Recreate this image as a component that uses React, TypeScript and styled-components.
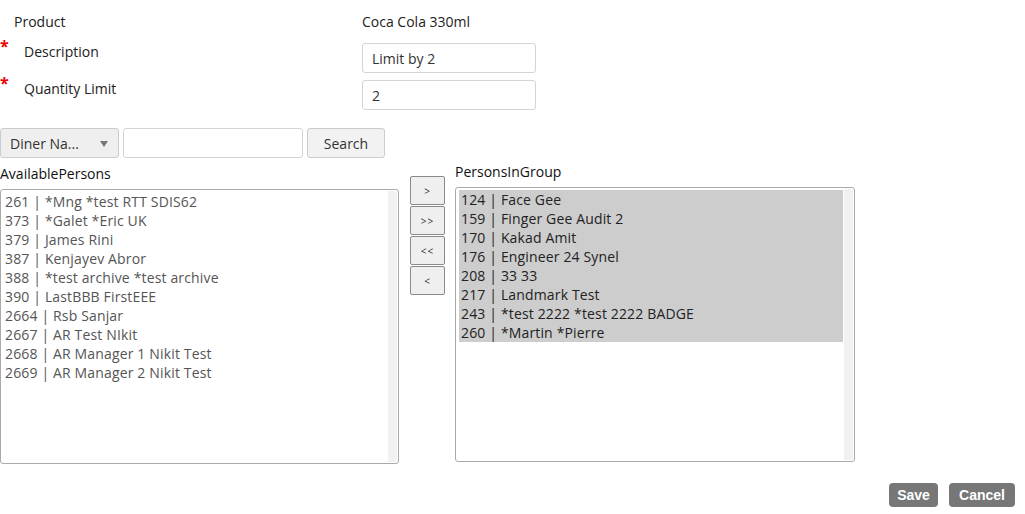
import styled, { createGlobalStyle } from 'styled-components';

const GlobalStyle = createGlobalStyle`
  html, body {
    margin: 0;
    padding: 0;
    background: #fff;
  }
  body {
    font-family: 'Open Sans', 'Liberation Sans', sans-serif;
    font-size: 14px;
    color: #222;
  }
`;

const available = [
  '261 | *Mng *test RTT SDIS62',
  '373 | *Galet *Eric UK',
  '379 | James Rini',
  '387 | Kenjayev Abror',
  '388 | *test archive *test archive',
  '390 | LastBBB FirstEEE',
  '2664 | Rsb Sanjar',
  '2667 | AR Test NIkit',
  '2668 | AR Manager 1 Nikit Test',
  '2669 | AR Manager 2 Nikit Test',
];

const inGroup = [
  '124 | Face Gee',
  '159 | Finger Gee Audit 2',
  '170 | Kakad Amit',
  '176 | Engineer 24 Synel',
  '208 | 33 33',
  '217 | Landmark Test',
  '243 | *test 2222 *test 2222 BADGE',
  '260 | *Martin *Pierre',
];

const Page = styled.div`
  width: 1025px;
  height: 514px;
  box-sizing: border-box;
  display: flex;
  flex-direction: column;
  overflow: hidden;
`;

const FieldRow = styled.div<{ $top: number }>`
  display: flex;
  align-items: flex-start;
  margin-top: ${(p) => p.$top}px;
`;

const LabelCell = styled.div<{ $indent: number }>`
  position: relative;
  width: 362px;
  padding-left: ${(p) => p.$indent}px;
  box-sizing: border-box;
  font-size: 14px;
  font-weight: 500;
  color: #222;
  line-height: 18px;
`;

const Required = styled.span`
  position: absolute;
  left: 0;
  top: -6px;
  color: #e00;
  font-size: 16px;
  font-weight: 700;
`;

const ValueText = styled.div`
  font-size: 14px;
  line-height: 18px;
  color: #222;
`;

const TextInput = styled.input<{ $width: number }>`
  width: ${(p) => p.$width}px;
  height: 30px;
  box-sizing: border-box;
  border: 1px solid #d4d4d4;
  border-radius: 3px;
  padding: 0 9px;
  font-family: inherit;
  font-size: 14px;
  color: #333;
  background: #fff;
  outline: none;
`;

const Toolbar = styled.div`
  display: flex;
  align-items: center;
  gap: 4px;
  margin-top: 18px;
`;

const SelectBox = styled.div`
  width: 119px;
  height: 30px;
  box-sizing: border-box;
  display: flex;
  align-items: center;
  justify-content: space-between;
  padding: 0 10px 0 9px;
  border: 1px solid #ccc;
  border-radius: 3px;
  background: #efefef;
  color: #333;
  font-size: 14px;
`;

const Caret = styled.span`
  width: 0;
  height: 0;
  border-left: 4px solid transparent;
  border-right: 4px solid transparent;
  border-top: 6px solid #777;
  margin-top: 2px;
`;

const GreyButton = styled.button`
  width: 78px;
  height: 30px;
  padding: 0;
  border: 1px solid #ccc;
  border-radius: 3px;
  background: #f2f2f2;
  color: #333;
  font-family: inherit;
  font-size: 14px;
`;

const Lists = styled.div`
  display: flex;
  align-items: flex-start;
  margin-top: 7px;
`;

const ListColumn = styled.div<{ $lift: number }>`
  display: flex;
  flex-direction: column;
  margin-top: ${(p) => -p.$lift}px;
`;

const ListTitle = styled.div`
  font-size: 14px;
  font-weight: 500;
  color: #111;
  line-height: 18px;
  margin-bottom: 6px;
`;

const ListBox = styled.div<{ $width: number }>`
  width: ${(p) => p.$width}px;
  height: 275px;
  box-sizing: border-box;
  border: 1px solid #aaa;
  border-radius: 3px;
  display: flex;
  overflow: hidden;
  background: #fff;
`;

const ListItems = styled.div`
  flex: 1;
  padding: 2px 0 2px 3px;
`;

// empty vertical scrollbar track on the right edge of each list
const ScrollTrack = styled.div`
  width: 9px;
  margin: 1px 1px 1px 0;
  background: #f1f1f1;
  border-radius: 0 2px 2px 0;
`;

const ListItem = styled.div<{ $selected?: boolean }>`
  font-size: 14px;
  line-height: 19px;
  letter-spacing: 0.15px;
  padding-left: ${(p) => (p.$selected ? 2 : 1)}px;
  margin-right: ${(p) => (p.$selected ? 1 : 0)}px;
  color: ${(p) => (p.$selected ? '#222' : '#555')};
  background: ${(p) => (p.$selected ? '#cdcdcd' : 'transparent')};
  white-space: nowrap;
`;

const MoveButtons = styled.div`
  display: flex;
  flex-direction: column;
  gap: 1px;
  margin: 11px 10px 0 11px;
`;

const MoveButton = styled.button`
  width: 35px;
  height: 29px;
  padding: 0;
  border: 1px solid #8a8a8a;
  border-radius: 2px;
  background: #efefef;
  color: #333;
  font-family: inherit;
  font-size: 10px;
  letter-spacing: 1px;
`;

const Footer = styled.div`
  display: flex;
  justify-content: flex-end;
  gap: 11px;
  padding-right: 10px;
  margin-top: 19px;
`;

const ActionButton = styled.button<{ $width: number }>`
  width: ${(p) => p.$width}px;
  height: 24px;
  padding: 0;
  border: none;
  border-radius: 4px;
  background: #777;
  color: #fff;
  font-family: 'Liberation Sans', Arial, sans-serif;
  font-weight: 700;
  font-size: 14px;
`;

export default function App() {
  return (
    <>
      <GlobalStyle />
      <Page>
        <FieldRow $top={13}>
          <LabelCell $indent={14}>Product</LabelCell>
          <ValueText>Coca Cola 330ml</ValueText>
        </FieldRow>
        <FieldRow $top={12}>
          <LabelCell $indent={24}>
            <Required>*</Required>
            Description
          </LabelCell>
          <TextInput $width={174} defaultValue="Limit by 2" />
        </FieldRow>
        <FieldRow $top={7}>
          <LabelCell $indent={24}>
            <Required>*</Required>
            Quantity Limit
          </LabelCell>
          <TextInput $width={174} defaultValue="2" />
        </FieldRow>

        <Toolbar>
          <SelectBox>
            <span>Diner Na...</span>
            <Caret />
          </SelectBox>
          <TextInput $width={180} />
          <GreyButton>Search</GreyButton>
        </Toolbar>

        <Lists>
          <ListColumn $lift={0}>
            <ListTitle>AvailablePersons</ListTitle>
            <ListBox $width={399}>
              <ListItems>
                {available.map((p) => (
                  <ListItem key={p}>{p}</ListItem>
                ))}
              </ListItems>
              <ScrollTrack />
            </ListBox>
          </ListColumn>
          <MoveButtons>
            <MoveButton>&gt;</MoveButton>
            <MoveButton>&gt;&gt;</MoveButton>
            <MoveButton>&lt;&lt;</MoveButton>
            <MoveButton>&lt;</MoveButton>
          </MoveButtons>
          <ListColumn $lift={2}>
            <ListTitle>PersonsInGroup</ListTitle>
            <ListBox $width={400}>
              <ListItems>
                {inGroup.map((p) => (
                  <ListItem key={p} $selected>
                    {p}
                  </ListItem>
                ))}
              </ListItems>
              <ScrollTrack />
            </ListBox>
          </ListColumn>
        </Lists>

        <Footer>
          <ActionButton $width={49}>Save</ActionButton>
          <ActionButton $width={66}>Cancel</ActionButton>
        </Footer>
      </Page>
    </>
  );
}
